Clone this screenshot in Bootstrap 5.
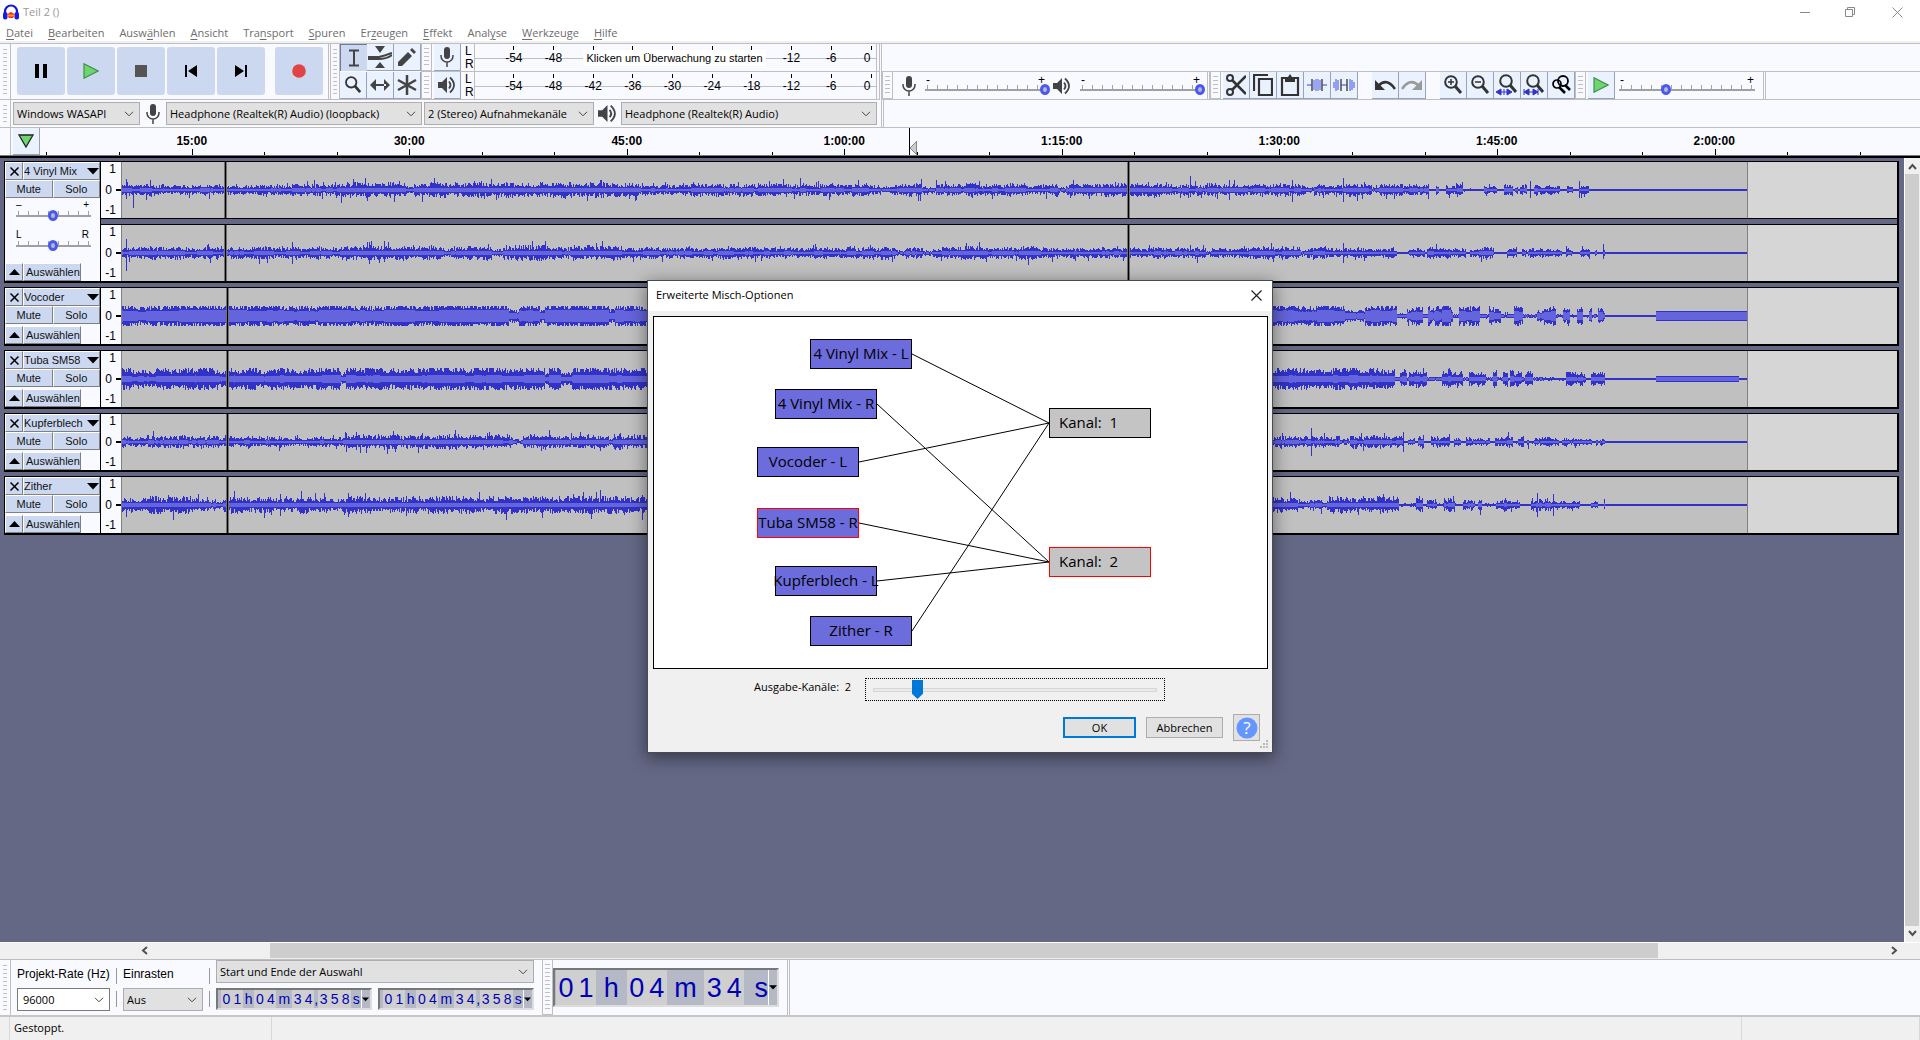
<!DOCTYPE html>
<html lang="de">
<head>
<meta charset="utf-8">
<meta name="viewport" content="width=device-width, initial-scale=1">
<title>Teil 2 ()</title>
<link rel="stylesheet" href="https://cdn.jsdelivr.net/npm/bootstrap@5.3.0/dist/css/bootstrap.min.css">
<script src="https://cdn.jsdelivr.net/npm/bootstrap@5.3.0/dist/js/bootstrap.bundle.min.js"></script>
<style>
:root{--ui:"Open Sans","Noto Sans",sans-serif;--ar:"Liberation Sans",Arial,sans-serif;--line:#bfbfbf;--face:#f8faff;--btn:#ccd8f0;--panel:#646885}
body{font:11px/16px var(--ui);color:#000;background:#fff;overflow:hidden}
button,input,select{font:inherit;color:inherit;border:0;padding:0;margin:0;border-radius:0}
svg{display:block}
.titlebar{height:24px;color:#999}
.appicon{width:16px;height:16px;margin-left:3px}
.winbtn{width:45px;height:20px;background:none;color:#888}
.menubar{height:17px;gap:15px;padding-left:6px}
.menubar a{color:#6d6d6d;text-decoration:none;line-height:17px}
.menubar u{text-underline-offset:2px}
.strip{height:2px;background:#f0f0f0}
.dock{background:var(--face);border-top:1px solid var(--line)}
.grab{width:11px;border-right:1px solid var(--line);padding:5px 3px;flex:none}
.grab.slim{width:9px;padding:5px 2px}
.grab i{display:block;height:100%;background:repeating-linear-gradient(#bfbfc4 0 1px,transparent 1px 4px)}
.grab.framed{border:1px solid var(--line);border-top:0;padding:4px 2px}
.row-top,.row-low{height:28px;border-bottom:1px solid var(--line)}
.endline{width:3px;border-left:1px solid var(--line);border-right:1px solid var(--line);flex:none}
.transport{width:328px;border-bottom:1px solid var(--line)}
.transport-set{gap:2px;padding:3px 0 0 6px}
.tbtn{width:48px;height:48px;border-radius:3px;background:var(--btn)}
.tbtn svg{margin:auto}
.toolset{border-bottom:1px solid var(--line)}
.toolgrid{display:grid;grid-template-columns:repeat(3,27px);row-gap:1px}
.tool{width:27px;height:27px;background:#eaf2ff;border-right:1px solid #9aa2b8;border-bottom:1px solid #9aa2b8;color:#333;flex:none}
.tool svg{margin:auto}
.tool.pressed{background:var(--btn);border:0;border-left:1px solid #6c7a9c;border-top:1px solid #6c7a9c}
.gapl{margin-left:2px}
.gapwide{margin-left:14px}
.meterbar{width:458px;border-bottom:1px solid var(--line);height:28px}
.lr{width:13px;font:12px/14px var(--ar);padding-left:4px}
.lr div{height:13px}
.scale-area{margin-right:2px;border-left:1px solid var(--line);border-right:1px solid var(--line);padding-left:19px;font:12px/14px var(--ar);background:linear-gradient(#bfbfbf,#bfbfbf) 0 14px/100% 1px no-repeat}
.scale-area span{flex:1;text-align:center;padding-top:7px;background:linear-gradient(#000,#000) 50% 2px/1px 4px no-repeat}
.scale-area span.zero{flex:0 0 25px;background-position:20px 2px;padding-left:7px}
.clickhint{left:108px;top:6px;width:183px;height:16px;background:#fff;font:11px/16px var(--ar);text-align:center;white-space:nowrap}
.sld{width:125px}
.sld.pace{width:140px}
.sld .lbl{font:12px/10px var(--ar);height:11px;padding:3px 5px 0 1px}
.trackbar{appearance:none;-webkit-appearance:none;width:100%;height:11px;background:repeating-linear-gradient(90deg,#a3a3a3 0 1px,transparent 1px 10px) 2px 2px/calc(100% - 4px) 4px no-repeat,linear-gradient(#a0a0a0,#a0a0a0) 0 6px/calc(100% - 4px) 2px no-repeat;display:block}
.trackbar::-webkit-slider-thumb{-webkit-appearance:none;width:10px;height:11px;border-radius:50%;border:3px solid #4a58f0;background:#b8b8c8;margin-top:1px}
.sel{appearance:none;-webkit-appearance:none;height:23px;border:1px solid #adadad;background:#e1e1e1 url("data:image/svg+xml,%3Csvg xmlns='http://www.w3.org/2000/svg' width='10' height='6'%3E%3Cpath d='M1 .8 5 4.8 9 .8' fill='none' stroke='%23444'/%3E%3C/svg%3E") right 5px center/10px 6px no-repeat;padding:0 3px}
.sel.white{background-color:#fff;border-color:#7a7a7a;padding-left:5px}
.w-host{width:127px;margin-left:2px}
.w-dev{width:256px}
.w-chan{width:170px;margin-left:2px}
.device{height:28px;border-bottom:1px solid var(--line)}
.ruler{height:28px;border-bottom:1px solid #777;position:relative}
.ruler .cells{padding:0 97px 0 43px;font:bold 12px/26px var(--ar)}
.ruler .cells span{flex:1;text-align:center}
.ruler .ticks{left:0;bottom:0;width:100%;height:28px}
.tracks{background:var(--panel);border-top:2px solid #000;min-height:0}
.tracklist{padding:3px 5px 0 4px;gap:4px}
.trk{border:1px solid #000;border-bottom-width:2px;border-right-width:2px;height:59px}
.trk.stereo{height:122px}
.ctl{width:96px;background:var(--face);border-right:1px solid #000;font:11px/16px var(--ar)}
.ctl button{background:var(--btn);border:1px solid #808080;border-left-color:#fff;border-top-color:#fff;overflow:hidden;text-align:left;white-space:nowrap;color:#111}
.ctl .h18{height:18px}
.ctl .xb{width:18px;flex:none}
.ctl .xb svg{margin:auto}
.ctl .sb{width:58px;padding-left:2px}
.ctl .ms button{text-align:center;height:18px;line-height:15px}
.ampscale{width:20px;background:var(--face);font:12px/14px var(--ar);text-align:right;padding:0 5px 1px 0;flex:none;position:relative}
.ampscale i{position:absolute;right:0;top:27px;width:5px;height:1px;background:#000;box-shadow:0 1px #000}
.wave{background:#d6d6d6;min-width:0;height:56px}
.wave svg{width:91.6%;height:56px;background:#c0c0c0;border-left:1px solid #808080;border-right:1px solid #808080}
.chgap{height:7px;background:var(--panel);border-top:1px solid #000;border-bottom:1px solid #000}
.mini{padding:3px 5px 0 11px}
.mini+.mini{padding-top:11px}
.mini .lbl{font:10px/8px var(--ar);height:8px;padding:0 6px 0 0}
.vscroll{width:16px;background:#f0f0f0;border-left:1px solid #fff;color:#505050;padding-right:1px}
.th{background:#cdcdcd}
.hscroll{height:17px;background:#f0f0f0;border-top:1px solid #fff;padding:0 21px 1px 140px}
.hscroll .th{width:78.9%;margin-left:122px}
.lower{height:58px;background:var(--face);border-top:1px solid var(--line);border-bottom:2px solid #c6c6c6}
.lower .fc{justify-content:space-between;padding:4px 0;display:flex;flex-direction:column}
.lower .c1{width:99px;margin-left:6px}
.lower .c2{width:86px}
.lower .c3{width:318px;padding:0 0 5px}
.lower .seps{padding:8px 6px 8px 0}
.c1 .sel{width:93px}
.c2 .sel{width:80px}
.fld{font:12px/16px var(--ar);padding-top:2px;white-space:nowrap}
.vsep{width:1px;height:16px;background:#999}
.tctl{width:156px;height:22px;border:2px solid #777;border-right-color:#ddd;border-bottom-color:#ddd;background:#b4b9c5;color:#0000b4;font:14px/19px var(--ar);padding-left:3px}
.tctl span{display:flex}
.tctl b{font-weight:400;width:11px;text-align:center}
.tctl .dg{background:#cfcfcf}
.tctl .u1{width:12px}.tctl .um{width:17px}.tctl .uc{width:4px}.tctl .us{width:11px}
.tctl button{border-left:1px solid #fff;background:#b4b9c5;width:9px}
.tctl.big{width:226px;height:39px;font:27px/36px var(--ar);padding-left:1px}
.tctl.big b{width:20px}
.tctl.big .u1{width:31px}.tctl.big .um{width:38px}.tctl.big .us{width:24px;text-align:right}
.status{height:23px;background:#f0f0f0;line-height:22px}
.status div{border-right:1px solid #d8d8d8}
.status .s0{width:10px}.status .s1{width:262px}.status .s2{width:178px}
.dlg{width:624px;height:471px;top:281px;background:#f0f0f0;box-shadow:0 0 0 1px #4a4a52,0 4px 16px 2px rgba(0,0,0,.45)}
.dlgtitle{height:30px;background:#fff;padding:0 10px 2px 8px}
.graph{height:353px;margin:5px 4px 0 5px;border:1px solid #000;background:#fff;position:relative}
.node{position:absolute;width:102px;height:30px;border:1px solid #000;background:#6c6cdc;font-size:15px;line-height:27px;display:flex;justify-content:center;white-space:nowrap}
.node.out{background:#c4c4c4;justify-content:flex-start;padding-left:9px;white-space:pre}
.node.hot{border-color:#f00}
.outrow{margin:9px 106px 0}
.outrow label{width:111px;height:24px;line-height:18px;white-space:pre}
.outrange{width:300px;height:23px;border:1px dotted #000;padding:0 7px}
.outrange input{appearance:none;-webkit-appearance:none;width:100%;height:21px;display:block;background:linear-gradient(#e7eaea,#e7eaea) 1px 10px/282px 2px no-repeat,linear-gradient(#d6d6d6,#d6d6d6) 0 9px/100% 4px no-repeat}
.outrange input::-webkit-slider-thumb{-webkit-appearance:none;width:11px;height:19px;background:#0078d7;clip-path:polygon(0 0,100% 0,100% 72%,50% 100%,0 72%)}
.btnrow{gap:10px;margin:12px 12px 0 0}
.dbtn{width:77px;height:21px;background:#e1e1e1;border:1px solid #adadad}
.dbtn.def{width:73px;border:2px solid #0078d7}
.dbtn.help{width:27px;height:27px}
</style>
</head>
<body class="vh-100 d-flex flex-column position-relative">
<svg width="0" height="0" class="position-absolute">
<symbol id="mic" viewBox="0 0 14 20"><rect x="4" y="0" width="6" height="12" rx="3" fill="#444"/><path d="M1 8v1a6 6 0 0 0 12 0V8M7 15v5" fill="none" stroke="#444" stroke-width="1.500"/></symbol>
<symbol id="spk" viewBox="0 0 18 18"><path d="M0 6h4l5-5v16l-5-5H0z" fill="#444"/><path d="M11 5.500q3 3.500 0 7M12 1.500q8 7.500 0 15" fill="none" stroke="#444" stroke-width="1.800"/></symbol>
<symbol id="lens" viewBox="0 0 20 20"><circle cx="8" cy="7" r="5.800" fill="none" stroke="#333" stroke-width="2"/><path d="m12 11 6 7" stroke="#333" stroke-width="3"/></symbol>
<symbol id="play" viewBox="0 0 16 16"><path d="M1 .8 15 8 1 15.200z" fill="#6fd66f" stroke="#3f8f4a" stroke-width="1.200"/></symbol>
<symbol id="dn" viewBox="0 0 12 7"><path d="M0 0h12L6 6.500z" fill="#000"/></symbol>
</svg>

<header class="titlebar d-flex align-items-center flex-shrink-0">
<svg class="appicon" viewBox="0 0 16 16"><path d="M2 10V7.500a6 6 0 0 1 12 0V10" fill="none" stroke="#1212d8" stroke-width="2.200"/><rect x="0" y="8" width="4.500" height="7.500" rx="2" fill="#1a1ae6"/><rect x="11.500" y="8" width="4.500" height="7.500" rx="2" fill="#1a1ae6"/><path d="m4 11 2-2 2-1 2 1 2 2-2 3H6z" fill="#f22"/><path d="m4 11.500 2-1h4l2 1-2 1H6z" fill="#fa0"/></svg>
<span class="ps-1 flex-fill">Teil 2 ()</span>
<button class="winbtn" aria-label="Minimieren"><svg class="m-auto" width="11" height="11"><path d="M0 5.500h10" stroke="currentColor"/></svg></button>
<button class="winbtn" aria-label="Wiederherstellen"><svg class="m-auto" width="11" height="11"><path d="M.5 2.500h7v7h-7zM2.500 2.500v-2h7v7h-2" fill="none" stroke="currentColor"/></svg></button>
<button class="winbtn gapl" aria-label="Schließen"><svg class="m-auto" width="11" height="11"><path d="m.5.5 10 10m0-10-10 10" stroke="currentColor"/></svg></button>
</header>
<nav class="menubar d-flex flex-shrink-0">
<a href="#"><u>D</u>atei</a><a href="#"><u>B</u>earbeiten</a><a href="#">Ausw<u>ä</u>hlen</a><a href="#"><u>A</u>nsicht</a><a href="#">Tra<u>n</u>sport</a><a href="#"><u>S</u>puren</a><a href="#">Er<u>z</u>eugen</a><a href="#"><u>E</u>ffekt</a><a href="#">Anal<u>y</u>se</a><a href="#"><u>W</u>erkzeuge</a><a href="#"><u>H</u>ilfe</a>
</nav>
<div class="strip flex-shrink-0"></div>

<section class="dock flex-shrink-0">
<div class="d-flex">
 <div class="transport d-flex">
  <div class="grab"><i></i></div>
  <div class="transport-set d-flex align-items-start">
  <button class="tbtn" aria-label="Pause"><svg width="14" height="14"><path d="M1 0h4v14H1zM9 0h4v14H9z"/></svg></button>
  <button class="tbtn" aria-label="Wiedergabe"><svg width="16" height="16"><use href="#play"/></svg></button>
  <button class="tbtn" aria-label="Stopp"><svg width="12" height="12"><path fill="#555" d="M0 0h12v12H0z"/></svg></button>
  <button class="tbtn" aria-label="Zum Anfang"><svg width="14" height="12"><path d="M1 0h2v12H1zM13 0v12L4 6z"/></svg></button>
  <button class="tbtn" aria-label="Zum Ende"><svg width="14" height="12"><path d="M11 0h2v12h-2zM1 0v12l9-6z"/></svg></button>
  <button class="tbtn ms-2" aria-label="Aufnahme"><svg width="14" height="14"><circle cx="7" cy="7" r="6.800" fill="#e04444"/></svg></button>
  </div>
 </div>
 <div class="toolset d-flex">
  <div class="endline"></div><div class="grab slim"><i></i></div>
  <div class="toolgrid">
  <button class="tool pressed" aria-label="Auswahl"><svg width="12" height="18"><path d="M1 1.500h10M1 16.500h10M6 1v16" stroke="#444" stroke-width="2"/></svg></button>
  <button class="tool" aria-label="Hüllkurve"><svg width="24" height="22"><path d="M7 0h10l-5 7zM7 22h10l-5-6z" fill="#444"/><path d="M0 11h11q5-1 13-4M0 13h11q7 0 13-4" fill="none" stroke="#444" stroke-width="2"/></svg></button>
  <button class="tool" aria-label="Zeichnen"><svg width="18" height="18"><path d="M0 18v-4L10 4l4 4L4 18zM12 2l2-2 4 4-2 2z" fill="#444"/></svg></button>
  <button class="tool" aria-label="Zoom"><svg width="18" height="18"><use href="#lens"/></svg></button>
  <button class="tool" aria-label="Verschieben"><svg width="20" height="14"><path d="M0 7l6-6v12zM20 7l-6-6v12zM4 6h12v2H4z" fill="#444"/></svg></button>
  <button class="tool" aria-label="Multifunktion"><svg width="20" height="20"><path d="M10 0v20M1 5l18 10M19 5 1 15" stroke="#444" stroke-width="2.500"/></svg></button>
  </div>
 </div>
 <div>
  <div class="meterbar d-flex"><div class="grab framed"><i></i></div>
   <button class="tool gapl" aria-label="Aufnahmepegel"><svg width="14" height="20"><use href="#mic"/></svg></button>
   <div class="lr"><div>L</div><div>R</div></div>
   <div class="scale-area d-flex flex-fill position-relative"><span>-54</span><span>-48</span><span></span><span></span><span></span><span></span><span></span><span>-12</span><span>-6</span><span class="zero">0</span><div class="clickhint position-absolute">Klicken um Überwachung zu starten</div></div></div>
  <div class="meterbar d-flex"><div class="grab framed"><i></i></div>
   <button class="tool gapl" aria-label="Wiedergabepegel"><svg width="18" height="18"><use href="#spk"/></svg></button>
   <div class="lr"><div>L</div><div>R</div></div>
   <div class="scale-area d-flex flex-fill"><span>-54</span><span>-48</span><span>-42</span><span>-36</span><span>-30</span><span>-24</span><span>-18</span><span>-12</span><span>-6</span><span class="zero">0</span></div></div>
 </div>
 <div class="endline"></div>
 <div class="flex-fill">
  <div class="row-top"></div>
  <div class="row-low d-flex">
   <div class="grab framed"><i></i></div>
   <svg class="align-self-center ms-2 me-2" width="16" height="20"><use href="#mic"/></svg>
   <div class="sld"><div class="lbl d-flex justify-content-between"><span>-</span><span>+</span></div><input class="trackbar" type="range" aria-label="Aufnahmelautstärke" min="0" max="100" value="100"></div>
   <svg class="align-self-center gapl me-2" width="20" height="18"><use href="#spk"/></svg>
   <div class="sld"><div class="lbl d-flex justify-content-between"><span>-</span><span>+</span></div><input class="trackbar" type="range" aria-label="Wiedergabelautstärke" min="0" max="100" value="100"></div>
   <div class="endline gapl"></div><div class="grab framed"><i></i></div>
   <div class="d-flex gapl">
   <button class="tool" aria-label="Ausschneiden"><svg width="20" height="22"><circle cx="4" cy="4" r="3" fill="none" stroke="#333" stroke-width="2"/><circle cx="4" cy="18" r="3" fill="none" stroke="#333" stroke-width="2"/><path d="m6 6 14 14M6 16 20 2" stroke="#333" stroke-width="2.600"/></svg></button>
   <button class="tool" aria-label="Kopieren"><svg width="20" height="22"><path d="M1 17V1h14M6 5h13v16H6z" fill="none" stroke="#333" stroke-width="2.200"/></svg></button>
   <button class="tool" aria-label="Einfügen"><svg width="20" height="22"><path d="M2 4h16v17H2z" fill="none" stroke="#333" stroke-width="2.200"/><path d="M5 3h3l2-3 2 3h3v5H5z" fill="#333"/></svg></button>
   <button class="tool" aria-label="Trimmen"><svg width="20" height="14"><path d="M0 7h5m10 0h5M7 2v10M9 1v12M11 1v12M13 2v10" stroke="#6e7de8" stroke-width="1.300"/><path d="M5 1v12M15 1v12" stroke="#555" stroke-width="1.600"/></svg></button>
   <button class="tool" aria-label="Stille"><svg width="22" height="14"><path d="M1 4v6M3 1v12M5 2v10M17 1v12M19 2v10M21 4v6M8 7h6" stroke="#6e7de8" stroke-width="1.400"/><path d="M8 1v12M14 1v12" stroke="#555" stroke-width="1.600"/></svg></button>
   <button class="tool gapwide" aria-label="Rückgängig"><svg width="22" height="14"><path d="M4 8q9-9 17 3" fill="none" stroke="#333" stroke-width="2.600"/><path d="M1 2v10h10z" fill="#333"/></svg></button>
   <button class="tool" aria-label="Wiederholen"><svg width="22" height="14"><path d="M18 8Q9-1 1 11" fill="none" stroke="#999" stroke-width="2.600"/><path d="M21 2v10H11z" fill="#999"/></svg></button>
   <button class="tool gapwide" aria-label="Vergrößern"><svg width="20" height="20"><use href="#lens"/><path d="M5 7h6M8 4v6" stroke="#333" stroke-width="1.500"/></svg></button>
   <button class="tool" aria-label="Verkleinern"><svg width="20" height="20"><use href="#lens"/><path d="M5 7h6" stroke="#333" stroke-width="1.500"/></svg></button>
   <button class="tool" aria-label="Auswahl einpassen"><svg width="22" height="22"><use href="#lens" x="2" width="20" height="20"/><path d="M0 18l5-3v6zM16 18l-5-3v6zM8 15v6M3 18h10" fill="#3232c8" stroke="#3232c8"/></svg></button>
   <button class="tool" aria-label="Projekt einpassen"><svg width="22" height="22"><use href="#lens" x="2" width="20" height="20"/><path d="M1 18l5-3v6zM15 18l-5-3v6zM1 15v6M15 15v6M3 18h10" fill="#3232c8" stroke="#3232c8"/></svg></button>
   <button class="tool" aria-label="Zoom umschalten"><svg width="20" height="20"><circle cx="6" cy="9" r="4" fill="none" stroke="#000" stroke-width="1.700"/><circle cx="12" cy="6" r="5" fill="none" stroke="#000" stroke-width="1.800"/><path d="m8 12 6 6M14 10l5 5" stroke="#000" stroke-width="2.600"/></svg></button>
   </div>
   <div class="grab framed"><i></i></div>
   <button class="tool gapl" aria-label="Wiedergabe mit Tempo"><svg width="16" height="16"><use href="#play"/></svg></button>
   <div class="sld pace ms-1"><div class="lbl d-flex justify-content-between"><span>-</span><span>+</span></div><input class="trackbar" type="range" aria-label="Tempo" min="0" max="100" value="32"></div>
   <div class="endline ms-1"></div>
  </div>
 </div>
</div>
<div class="device d-flex align-items-center">
 <div class="grab align-self-stretch"><i></i></div>
 <select class="sel w-host" aria-label="Host"><option>Windows WASAPI</option></select>
 <svg class="mx-1" width="18" height="20"><use href="#mic"/></svg>
 <select class="sel w-dev" aria-label="Aufnahmegerät"><option>Headphone (Realtek(R) Audio) (loopback)</option></select>
 <select class="sel w-chan" aria-label="Kanäle"><option>2 (Stereo) Aufnahmekanäle</option></select>
 <svg class="mx-1" width="19" height="19"><use href="#spk"/></svg>
 <select class="sel w-dev" aria-label="Wiedergabegerät"><option>Headphone (Realtek(R) Audio)</option></select>
 <div class="endline align-self-stretch ms-1"></div>
</div>
<div class="ruler d-flex">
 <div class="grab p-0"></div>
 <button class="tool gapl" aria-label="Abspielkopf"><svg width="16" height="14"><path d="M1 1h14L8 13z" fill="#6fd66f" stroke="#222" stroke-width="1.300"/></svg></button>
 <div class="cells d-flex flex-fill"><span>15:00</span><span>30:00</span><span>45:00</span><span>1:00:00</span><span>1:15:00</span><span>1:30:00</span><span>1:45:00</span><span>2:00:00</span></div>
 <svg class="ticks position-absolute" id="ticks" preserveAspectRatio="none" viewBox="0 0 1920 28" shape-rendering="crispEdges"></svg>
</div>
</section>

<main class="tracks d-flex flex-fill">
<div class="tracklist d-flex flex-column flex-fill" id="tracks"></div>
<div class="vscroll d-flex flex-column">
 <svg class="mx-auto my-1" width="9" height="8"><path d="M1 7l3.500-4L8 7" fill="none" stroke="currentColor" stroke-width="2"/></svg>
 <div class="th flex-fill"></div>
 <svg class="mx-auto my-1" width="9" height="8"><path d="M1 1l3.500 4L8 1" fill="none" stroke="currentColor" stroke-width="2"/></svg>
</div>
</main>
<div class="hscroll d-flex flex-shrink-0">
 <svg class="my-auto flex-shrink-0" width="8" height="9"><path d="M7 1 3 4.500 7 8" fill="none" stroke="#505050" stroke-width="2"/></svg>
 <div class="th"></div>
 <svg class="my-auto ms-auto flex-shrink-0" width="8" height="9"><path d="m1 1 4 3.500L1 8" fill="none" stroke="#505050" stroke-width="2"/></svg>
</div>

<section class="lower d-flex flex-shrink-0">
 <div class="grab"><i></i></div>
 <div class="fc c1"><label class="fld" for="rate">Projekt-Rate (Hz)</label><select id="rate" class="sel white"><option>96000</option></select></div>
 <div class="fc seps"><i class="vsep"></i><i class="vsep"></i></div>
 <div class="fc c2"><label class="fld" for="snap">Einrasten</label><select id="snap" class="sel"><option>Aus</option></select></div>
 <div class="fc seps"><i class="vsep"></i><i class="vsep"></i></div>
 <div class="fc c3"><select class="sel" aria-label="Auswahlmodus"><option>Start und Ende der Auswahl</option></select>
  <div class="d-flex justify-content-between">
   <div class="tctl d-flex" data-small></div><div class="tctl d-flex" data-small></div>
  </div></div>
 <div class="grab framed ms-2"><i></i></div>
 <div class="tctl big d-flex align-self-center"><span class="dg"><b>0</b><b>1</b></span><b class="u1">h</b><span class="dg"><b>0</b><b>4</b></span><b class="um">m</b><span class="dg"><b>3</b><b>4</b></span><b class="us flex-fill">s</b><button aria-label="Format"><svg width="8" height="5"><use href="#dn"/></svg></button></div>
 <div class="endline ms-2"></div>
</section>
<footer class="status d-flex flex-shrink-0"><div class="s0"></div><div class="s1 ps-1">Gestoppt.</div><div class="flex-fill"></div><div class="s2"></div></footer>

<section class="dlg position-absolute start-50 translate-middle-x" role="dialog" aria-labelledby="dt">
 <div class="dlgtitle d-flex align-items-center justify-content-between"><span id="dt">Erweiterte Misch-Optionen</span><button class="bg-transparent" aria-label="Schließen"><svg width="11" height="11"><path d="m.5.5 10 10m0-10-10 10" stroke="#222" stroke-width="1.200"/></svg></button></div>
 <div class="graph" id="graph">
  <svg class="position-absolute top-0 start-0 w-100 h-100" viewBox="0 0 613 351"><path d="M258 37 395 106M223 87 395 245M205 145 395 106M205 206 395 245M223 264 395 245M258 314 395 106" fill="none" stroke="#000"/></svg>
 </div>
 <div class="outrow d-flex"><label for="outc">Ausgabe-Kanäle:  2</label><div class="outrange"><input id="outc" type="range" min="1" max="8" value="2"></div></div>
 <div class="btnrow d-flex justify-content-end align-items-center"><button class="dbtn def">OK</button><button class="dbtn">Abbrechen</button><button class="dbtn help" aria-label="Hilfe"><svg class="m-auto" width="22" height="22"><circle cx="11" cy="11" r="10.500" fill="#6496ff"/><text x="11" y="17" text-anchor="middle" font-size="17" fill="#fff">?</text></svg></button></div>
 <svg class="position-absolute bottom-0 end-0 m-1" width="8" height="8"><path d="M6 0h2v2H6zM3 3h2v2H3zM6 3h2v2H6zM0 6h2v2H0zM3 6h2v2H3zM6 6h2v2H6z" fill="#bbb"/></svg>
</section>

<script>
/* ruler ticks: a major every 15 minutes, two minors between */
let t='';
for(let i=-2;i<24;i++){const x=Math.round(191.5+i*72.53);t+='M'+(x+.5)+' 28v-'+(i%3?3:6);}
document.getElementById('ticks').innerHTML='<path d="'+t+'" stroke="#000"/><path d="M916 15v12l-6-6z" fill="#ccc" stroke="#888"/><path d="M909.500 1v27" stroke="#000"/>';

/* mixer graph nodes */
[['4 Vinyl Mix - L',156,22],['4 Vinyl Mix - R',121,72],['Vocoder - L',103,130],['Tuba SM58 - R',103,191,'hot'],['Kupferblech - L',121,249],['Zither - R',156,299],['Kanal:  1',395,91,'out'],['Kanal:  2',395,230,'out hot']].forEach(n=>{
 const d=document.createElement('div');d.className='node '+(n[3]||'');d.style.left=n[1]+'px';d.style.top=n[2]+'px';d.textContent=n[0];document.getElementById('graph').append(d);});

/* small time fields */
document.querySelectorAll('[data-small]').forEach(e=>{e.innerHTML='<span class="dg"><b>0</b><b>1</b></span><b class="u1">h</b><span class="dg"><b>0</b><b>4</b></span><b class="um">m</b><span class="dg"><b>3</b><b>4</b></span><b class="uc">,</b><span class="dg"><b>3</b><b>5</b><b>8</b></span><b class="us flex-fill">s</b><button aria-label="Format"><svg width="7" height="5"><use href="#dn"/></svg></button>';});

/* waveforms: peak and RMS columns from a seeded envelope */
function rng(s){return()=>{s=s+0x6D2B79F5|0;let v=Math.imul(s^s>>>15,1|s);v=v+Math.imul(v^v>>>7,61|v)^v;return((v^v>>>14)>>>0)/4294967296;};}
const bar=(x,a,b)=>'M'+x+' '+(28-a)+'h1v'+(a+b)+'h-1z';
function wave(o){
 const r=rng(o.seed),W=1625;let pk='',rm='',slow=.7,gate=1,hold=0;
 for(let x=0;x<W;x++){
  if(x>1482){
   if(o.block&&x>=1534&&x<(o.blockEnd||W)){pk+=bar(x,o.block,o.block);rm+=bar(x,o.block-1,o.block-1);continue;}
   pk+=bar(x,1,1);continue;
  }
  slow+=(r()-.48)*.16;slow=Math.max(.45,Math.min(1,slow));
  if(hold--<0){
   if(x>1270){gate=r()<.34?.22:.6+.6*r();hold=r()*6;}
   else{gate=r()<.05?.45:.75+.3*r();hold=2+r()*9;}
  }
  const fade=x>1270?Math.max(.6,.95-(x-1270)/600):1, swell=(x>220&&x<500)?1.2:1;
  const m=Math.min(o.amp*swell*fade*gate*(.6+.45*slow),o.max);
  let a=m*(.4+.65*r()),b=m*(.4+.65*r());
  if(o.dense){a=m*(.6+.55*r());b=m*(.6+.55*r());}
  if(r()<o.spike)a*=1.7;
  if(r()<o.spike)b*=1.7;
  a=Math.max(1,Math.min(o.cap||20,Math.round(a)));b=Math.max(1,Math.min(o.cap||20,Math.round(b)));
  const q=Math.min(a-1,b-1,Math.round(m*o.rms));
  pk+=bar(x,a,b);
  if(q>0)rm+=bar(x,q,q);
 }
 const sp=(o.spikes||[]).map(s=>bar(s[0],s[1],s[2])).join('');
 const cut=o.cuts.map(c=>'<path d="M'+(c-1)+' 0h3v56h-3z" fill="#707070"/><path d="M'+c+' 0h1v56h-1z" fill="#000"/>').join('');
 return '<div class="wave flex-fill"><svg viewBox="0 0 1625 56" preserveAspectRatio="none" shape-rendering="crispEdges"><path d="'+pk+sp+'" fill="#3232c8"/><path d="'+rm+'" fill="#6464dc"/>'+cut+'</svg></div>';
}
const amp='<div class="ampscale d-flex flex-column justify-content-between">1<span class="d-block pe-1">0</span><span>-1</span><i></i></div>';
const head=n=>'<div class="d-flex h18"><button class="xb h18" aria-label="Spur schließen"><svg width="9" height="9"><path d="m.5.5 8 8M8.500.5l-8 8" stroke="#000" stroke-width="1.500"/></svg></button><button class="flex-fill h18 d-flex align-items-center justify-content-between"><span>'+n+'</span><svg width="12" height="7"><use href="#dn"/></svg></button></div><div class="d-flex ms"><button class="w-50">Mute</button><button class="w-50">Solo</button></div>';
const foot='<div class="d-flex h18 mt-auto"><button class="xb h18" aria-label="Einklappen"><svg width="11" height="6"><path d="M0 6h11L5.500 0z"/></svg></button><button class="sb h18">Auswählen</button></div>';
const mini='<div class="mini"><div class="lbl d-flex justify-content-between"><span>–</span><span>+</span></div><input class="trackbar" type="range" aria-label="Lautstärke" value="47"></div><div class="mini"><div class="lbl d-flex justify-content-between"><span>L</span><span>R</span></div><input class="trackbar" type="range" aria-label="Balance" value="47"></div>';
const list=[
 {n:'4 Vinyl Mix',ch:[{seed:11,amp:7,max:8,rms:.27,spike:.06,cuts:[103,1006],spikes:[[4,11,9],[11,3,18],[219,4,13],[1068,14,7],[1107,10,10],[1170,10,12],[1221,12,12],[1408,9,8],[1457,9,8]]},{seed:29,amp:6.5,max:8,rms:.27,spike:.05,cuts:[103,1006],spikes:[[4,14,18],[247,11,11],[262,12,9],[1221,10,10],[1481,9,6]]}]},
 {n:'Vocoder',ch:[{seed:37,amp:12,max:11,rms:.52,spike:.01,cap:10,dense:1,cuts:[105],block:5}]},
 {n:'Tuba SM58',ch:[{seed:53,amp:10.5,max:11,rms:.33,spike:.02,cap:11,dense:1,cuts:[105],block:3,blockEnd:1617}]},
 {n:'Kupferblech',ch:[{seed:71,amp:6.5,max:8,rms:.27,spike:.05,cuts:[105],spikes:[[224,9,10],[244,6,11],[1189,14,14],[1281,10,10]]}]},
 {n:'Zither',ch:[{seed:97,amp:8.5,max:9,rms:.27,spike:.04,cuts:[105],spikes:[[158,11,11],[226,12,12],[1415,12,12],[1431,11,11]]}]}];
document.getElementById('tracks').innerHTML=list.map(k=>{
 const s=k.ch.length>1;
 return '<div class="trk d-flex'+(s?' stereo':'')+'"><div class="ctl d-flex flex-column flex-shrink-0">'+head(k.n)+(s?mini:'')+foot+'</div><div class="flex-fill">'+
 k.ch.map(c=>'<div class="d-flex">'+amp+wave(c)+'</div>').join('<div class="chgap"></div>')+'</div></div>';}).join('');
</script>
</body>
</html>
